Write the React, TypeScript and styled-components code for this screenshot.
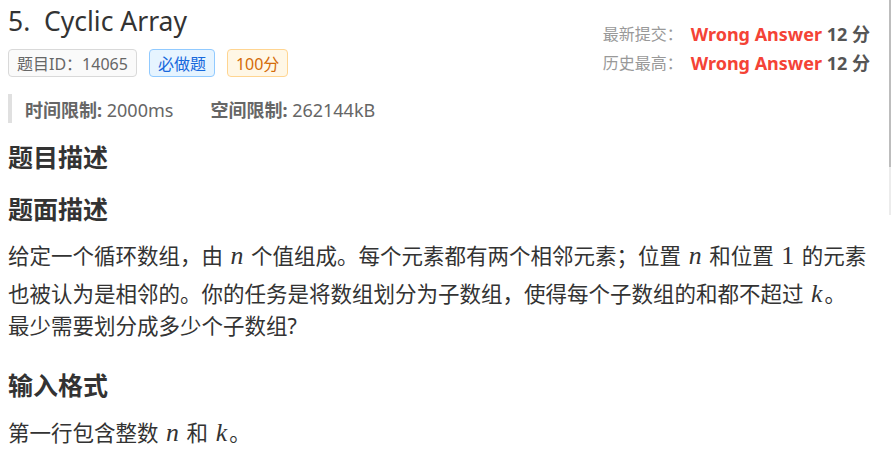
import styled, { createGlobalStyle } from "styled-components";

const GlobalStyle = createGlobalStyle`
    html, body {
        margin: 0;
        padding: 0;
        background: #fff;
    }
    body {
        font-family: "Noto Sans", "Noto Sans CJK SC", sans-serif;
        color: #333;
        overflow: hidden;
    }
`;

const Page = styled.div`
    position: relative;
    width: 892px;
    height: 456px;
    padding: 3px 0 0 8px;
    box-sizing: border-box;
    overflow: hidden;
`;

const Header = styled.div`
    display: flex;
    justify-content: space-between;
    align-items: flex-start;
`;

const TitleBlock = styled.div`
    display: flex;
    flex-direction: column;
`;

const Title = styled.h1`
    margin: 0;
    font-size: 26.5px;
    line-height: 36px;
    font-weight: 400;
    color: #333;
    white-space: pre;
`;

const TagRow = styled.div`
    display: flex;
    gap: 12px;
    margin-top: 10px;
`;

const tagColors = {
    plain: { bg: "#fafafa", border: "#d9d9d9", color: "#666" },
    blue: { bg: "#e6f4ff", border: "#91caff", color: "#1668dc" },
    orange: { bg: "#fff7e6", border: "#ffd591", color: "#d46b08" },
};

const Tag = styled.span<{ $tone: keyof typeof tagColors }>`
    display: inline-flex;
    align-items: center;
    height: 28px;
    padding: 0 8px;
    box-sizing: border-box;
    border-radius: 4px;
    font-size: 16px;
    background: ${(p) => tagColors[p.$tone].bg};
    border: 1px solid ${(p) => tagColors[p.$tone].border};
    color: ${(p) => tagColors[p.$tone].color};
`;

const Limits = styled.div`
    display: flex;
    align-items: center;
    gap: 37px;
    margin-top: 17px;
    height: 29px;
    padding-left: 13px;
    border-left: 4px solid #e0e0e0;
    font-size: 18px;
    color: #666;
`;

const LimitLabel = styled.b`
    font-weight: 700;
`;

const Stats = styled.div`
    display: grid;
    grid-template-columns: auto auto;
    column-gap: 8px;
    row-gap: 3px;
    padding: 18px 22px 0 0;
    align-items: center;
`;

const StatLabel = styled.span`
    font-size: 16px;
    line-height: 26px;
    color: #999;
`;

const StatValue = styled.span`
    font-size: 18px;
    line-height: 26px;
    font-weight: 700;
    color: #555;
`;

const Verdict = styled.span`
    color: #f44336;
`;

const Heading = styled.h2<{ $gap: number }>`
    margin: ${(p) => p.$gap}px 0 0;
    font-size: 25px;
    line-height: 32px;
    font-weight: 700;
    color: #333;
`;

const Paragraph = styled.div<{ $gap: number }>`
    margin-top: ${(p) => p.$gap}px;
    font-size: 21.5px;
    color: #333;
`;

const Line = styled.div<{ $extra?: number }>`
    line-height: 32px;
    white-space: nowrap;
    margin-top: ${(p) => p.$extra ?? 0}px;
`;

const MathVar = styled.span`
    font-family: "Liberation Serif", "DejaVu Serif", serif;
    font-style: italic;
    font-size: 1.2em;
    margin: 0 2px;
`;

const MathNum = styled.span`
    font-family: "Liberation Serif", "DejaVu Serif", serif;
    font-size: 1.2em;
    margin: 0 2px;
`;

const ScrollThumb = styled.div`
    position: absolute;
    top: 0;
    right: 1px;
    width: 2px;
    height: 167px;
    background: #bdbdbd;
`;

const ScrollTrack = styled.div`
    position: absolute;
    top: 167px;
    right: 1px;
    width: 2px;
    height: 48px;
    background: #ececec;
`;

const App = () => {
    return (
        <Page>
            <GlobalStyle />
            <Header>
                <TitleBlock>
                    <Title>5.  Cyclic Array</Title>
                    <TagRow>
                        <Tag $tone="plain">题目ID：14065</Tag>
                        <Tag $tone="blue">必做题</Tag>
                        <Tag $tone="orange">100分</Tag>
                    </TagRow>
                    <Limits>
                        <span>
                            <LimitLabel>时间限制:</LimitLabel> 2000ms
                        </span>
                        <span>
                            <LimitLabel>空间限制:</LimitLabel> 262144kB
                        </span>
                    </Limits>
                </TitleBlock>
                <Stats>
                    <StatLabel>最新提交：</StatLabel>
                    <StatValue>
                        <Verdict>Wrong Answer</Verdict> 12 分
                    </StatValue>
                    <StatLabel>历史最高：</StatLabel>
                    <StatValue>
                        <Verdict>Wrong Answer</Verdict> 12 分
                    </StatValue>
                </Stats>
            </Header>

            <Heading $gap={18}>题目描述</Heading>
            <Heading $gap={20}>题面描述</Heading>
            <Paragraph $gap={15}>
                <Line>
                    给定一个循环数组，由 <MathVar>n</MathVar> 个值组成。每个元素都有两个相邻元素；位置 <MathVar>n</MathVar> 和位置 <MathNum>1</MathNum> 的元素
                </Line>
                <Line $extra={6}>
                    也被认为是相邻的。你的任务是将数组划分为子数组，使得每个子数组的和都不超过 <MathVar>k</MathVar>。
                </Line>
                <Line>最少需要划分成多少个子数组?</Line>
            </Paragraph>

            <Heading $gap={27}>输入格式</Heading>
            <Paragraph $gap={16}>
                <Line>
                    第一行包含整数 <MathVar>n</MathVar> 和 <MathVar>k</MathVar>。
                </Line>
            </Paragraph>

            <ScrollThumb />
            <ScrollTrack />
        </Page>
    );
};

export default App;
